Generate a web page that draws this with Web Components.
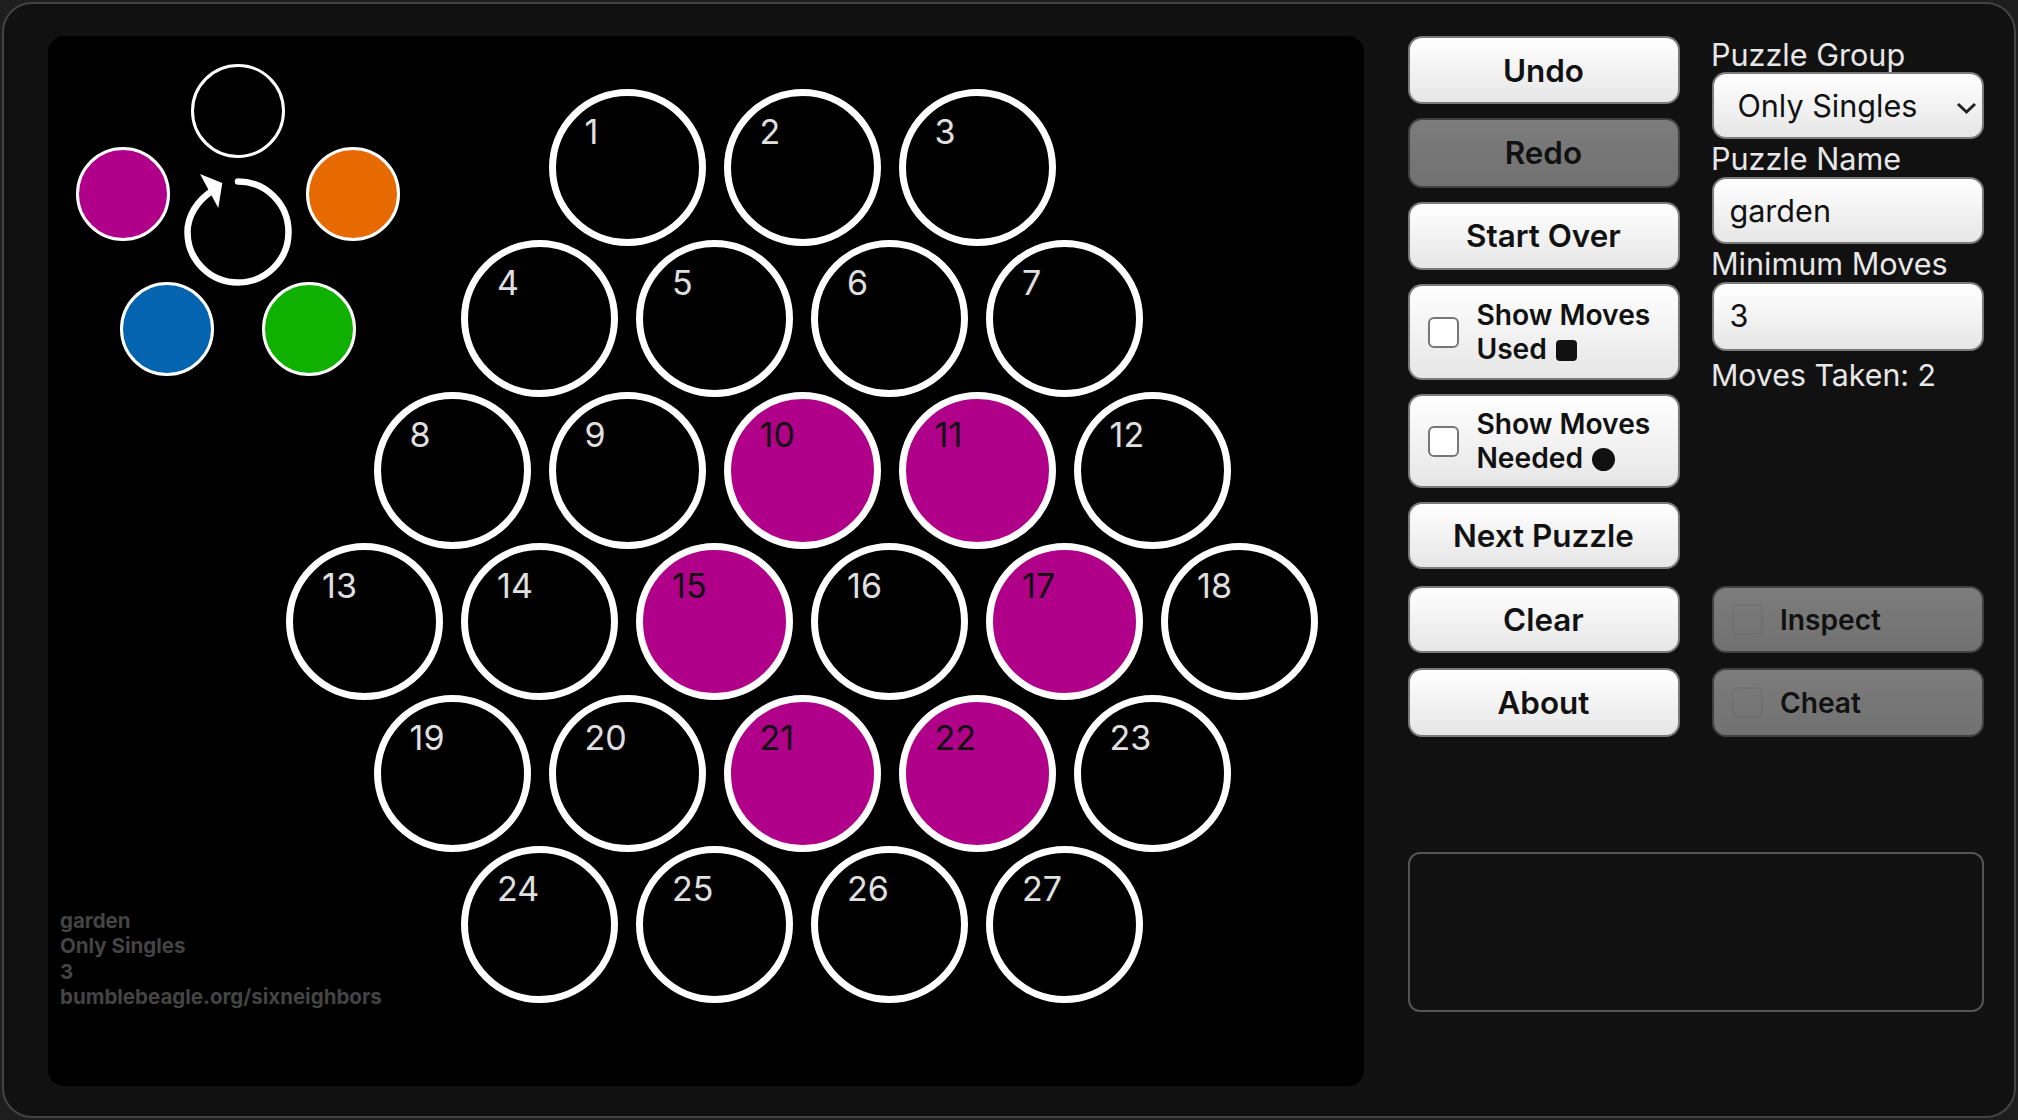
<!DOCTYPE html>
<html>
<head>
<meta charset="utf-8">
<title>Six Neighbors</title>
<style>
  html, body { margin: 0; background: #1e1e1e; }
</style>
</head>
<body>
<six-neighbors></six-neighbors>
<script>
const FONT = '"Inter", "Liberation Sans", sans-serif'

class HexCell extends HTMLElement {
  connectedCallback () {
    const x = +this.getAttribute('x')
    const y = +this.getAttribute('y')
    const on = this.hasAttribute('on')
    this.attachShadow({ mode: 'open' }).innerHTML = `
      <style>
        :host {
          position: absolute;
          left: ${x - 78.5}px;
          top: ${y - 78.5}px;
          width: 157px;
          height: 157px;
          box-sizing: border-box;
          border: 7px solid #fff;
          border-radius: 50%;
          background: ${on ? '#b0008a' : '#000'};
          color: ${on ? '#111' : '#e0e0e0'};
          font: 34px/40px ${FONT};
        }
        span { position: absolute; left: 28.8px; top: 16px; }
      </style>
      <span><slot></slot></span>`
  }
}

class ColorDot extends HTMLElement {
  connectedCallback () {
    const x = +this.getAttribute('x')
    const y = +this.getAttribute('y')
    this.attachShadow({ mode: 'open' }).innerHTML = `
      <style>
        :host {
          position: absolute;
          left: ${x - 47}px;
          top: ${y - 47}px;
          width: 94px;
          height: 94px;
          box-sizing: border-box;
          border: 3.5px solid #fff;
          border-radius: 50%;
          background: ${this.getAttribute('color') || '#000'};
        }
      </style>`
  }
}

class HexBoard extends HTMLElement {
  constructor () {
    super()
    this.attachShadow({ mode: 'open' }).innerHTML = `
      <style>
        :host {
          display: flex;
          align-items: flex-end;
          position: relative;
          box-sizing: border-box;
          flex: none;
          width: 1316px;
          height: 1050px;
          padding: 0 0 76px 12px;
          background: #000;
          border-radius: 16px;
        }
        .credit {
          font: 700 20.5px/25.6px ${FONT};
          color: #444;
        }
        svg { position: absolute; left: 0; top: 0; }
      </style>
      <svg width="320" height="280" viewBox="48 36 320 280">
        <path d="M238 181.5C266 181.5 288.5 204 288.5 232S266 282.5 238 282.5 187.5 260 187.5 232C187.5 216 197 201 212 191"
              fill="none" stroke="#fff" stroke-width="6.5" stroke-linecap="round"/>
        <polygon points="200,174 222.3,183 218.3,208" fill="#fff"/>
      </svg>
      <slot name="cells"></slot>
      <div class="credit"><slot></slot></div>`
  }
}

class GameButton extends HTMLElement {
  constructor () {
    super()
    this.attachShadow({ mode: 'open' }).innerHTML = `
      <style>
        :host {
          display: flex;
          align-items: center;
          justify-content: center;
          box-sizing: border-box;
          height: var(--h, 67px);
          padding: 1px 2px 0 0;
          border: 2px solid #7a7a7a;
          border-radius: 14px;
          background: linear-gradient(#fff, #e6e6e6);
          color: #111;
          font: 600 31.4px/34px ${FONT};
        }
        :host([disabled]) { opacity: .45; }
        :host([check]) {
          justify-content: flex-start;
          gap: 17px;
          padding-left: 18px;
          font-size: 28.2px;
        }
        :host([check][disabled]) input { background: transparent; border-color: rgba(0, 0, 0, .06); }
        input {
          appearance: none;
          flex: none;
          box-sizing: border-box;
          width: 31px;
          height: 31px;
          margin: 0;
          border: 2px solid #777;
          border-radius: 6px;
          background: #fff;
        }
        :host(:not([check])) input { display: none; }
      </style>
      <input type="checkbox"><div><slot></slot></div>`
  }
}

class FormField extends HTMLElement {
  constructor () {
    super()
    this.attachShadow({ mode: 'open' }).innerHTML = `
      <style>
        :host {
          display: block;
          color: #e8e8e8;
          font: 30.6px/37.8px ${FONT};
        }
        .label { margin-left: -1px; position: relative; top: 1px; }
        .box {
          position: relative;
          box-sizing: border-box;
          height: var(--h, 67px);
          padding: 2px 0 0 15.5px;
          border: 2px solid #7a7a7a;
          border-radius: 14px;
          background: linear-gradient(#fff, #e6e6e6);
          color: #111;
          line-height: 60px;
        }
        svg { position: absolute; right: 5px; top: 27px; }
        :host(:not([select])) svg { display: none; }
        :host([select]) .box { padding-left: 23.5px; }
      </style>
      <div class="label"><slot name="label"></slot></div>
      <div class="box" role="textbox">
        <slot></slot>
        <svg width="21" height="14" viewBox="0 0 21 14">
          <path d="M2 3l8.5 8L19 3" fill="none" stroke="#222" stroke-width="3"/>
        </svg>
      </div>`
  }
}

class ControlPanel extends HTMLElement {
  constructor () {
    super()
    this.attachShadow({ mode: 'open' }).innerHTML = `
      <style>
        :host {
          display: flex;
          flex-direction: column;
          box-sizing: border-box;
          flex: none;
          width: 575.5px;
          height: 976px;
        }
        .cols {
          display: grid;
          grid-template-columns: 272px 272px;
          column-gap: 31.5px;
        }
        .stack { display: flex; flex-direction: column; }
        .stack.left { row-gap: 14.3px; }
        .lower { margin-top: 16.3px; row-gap: 14.9px; }
        .output {
          box-sizing: border-box;
          height: 160.5px;
          margin-top: auto;
          border: 2px solid #555;
          border-radius: 12px;
        }
        .taken {
          margin: 6px 0 0 -1px;
          color: #e8e8e8;
          font: 30.3px/36.5px ${FONT};
        }
        .form { margin-top: -1.5px; }
      </style>
      <div class="cols">
        <div class="stack left"><slot name="actions"></slot></div>
        <div class="stack form"><slot name="form"></slot><div class="taken"><slot name="taken"></slot></div></div>
      </div>
      <div class="cols lower"><slot name="lower"></slot></div>
      <div class="output"></div>`
  }
}

class SixNeighbors extends HTMLElement {
  constructor () {
    super()
    const rows = [[1, 627.3, 3], [4, 539.8, 4], [8, 452.3, 5], [13, 364.8, 6], [19, 452.3, 5], [24, 539.8, 4]]
    const lit = [10, 11, 15, 17, 21, 22]
    let cells = ''
    rows.forEach(([first, x0, count], r) => {
      for (let i = 0; i < count; i++) {
        const n = first + i
        const x = x0 + i * 175 - 48
        const y = 167 + r * 151.55 - 36
        cells += `<hex-cell slot="cells" x="${x}" y="${y}"${lit.includes(n) ? ' on' : ''}>${n}</hex-cell>`
      }
    })
    const dots = [[238, 111, ''], [123.2, 194.2, '#b0008a'], [352.5, 194.2, '#e66a00'], [167, 329.3, '#0464b0'], [308.7, 329.3, '#10b000']]
      .map(([x, y, c]) => `<color-dot slot="cells" x="${x - 48}" y="${y - 36}" color="${c}"></color-dot>`).join('')
    const sq = 'display:inline-block;width:21.5px;height:21.5px;background:#111;vertical-align:-2px;margin-left:9px'
    this.attachShadow({ mode: 'open' }).innerHTML = `
      <style>
        :host { display: block; height: 100vh; box-sizing: border-box; padding: 2px; }
        .frame {
          display: flex;
          column-gap: 44.4px;
          box-sizing: border-box;
          height: 100%;
          padding: 32px 0 0 44px;
          background: #111;
          border: 2px solid #444;
          border-radius: 30px;
        }
      </style>
      <div class="frame">
        <hex-board>
          ${dots}${cells}
          garden<br>Only Singles<br>3<br>bumblebeagle.org/sixneighbors
        </hex-board>
        <control-panel>
          <game-button slot="actions" style="--h:68px">Undo</game-button>
          <game-button slot="actions" style="--h:69.4px" disabled>Redo</game-button>
          <game-button slot="actions" style="--h:67.7px">Start Over</game-button>
          <game-button slot="actions" style="--h:95.7px" check>Show Moves<br>Used<span style="${sq};border-radius:4px"></span></game-button>
          <game-button slot="actions" style="--h:93.7px" check>Show Moves<br>Needed<span style="${sq};width:23px;height:23px;vertical-align:-3px;border-radius:50%"></span></game-button>
          <game-button slot="actions" style="--h:67.4px">Next Puzzle</game-button>
          <form-field slot="form" style="--h:67.2px" select><span slot="label">Puzzle Group</span>Only Singles</form-field>
          <form-field slot="form" style="--h:67.2px"><span slot="label">Puzzle Name</span>garden</form-field>
          <form-field slot="form" style="--h:68.8px"><span slot="label">Minimum Moves</span>3</form-field>
          <span slot="taken">Moves Taken: 2</span>
          <game-button slot="lower" style="--h:67.3px">Clear</game-button>
          <game-button slot="lower" style="--h:67.3px" check disabled>Inspect</game-button>
          <game-button slot="lower" style="--h:68.7px">About</game-button>
          <game-button slot="lower" style="--h:68.7px" check disabled>Cheat</game-button>
        </control-panel>
      </div>`
  }
}

customElements.define('hex-cell', HexCell)
customElements.define('color-dot', ColorDot)
customElements.define('hex-board', HexBoard)
customElements.define('game-button', GameButton)
customElements.define('form-field', FormField)
customElements.define('control-panel', ControlPanel)
customElements.define('six-neighbors', SixNeighbors)
</script>
</body>
</html>
